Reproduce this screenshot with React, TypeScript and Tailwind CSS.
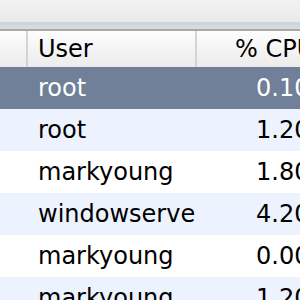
import React from "react";

const rows = [
  { user: "root", cpu: "0.10", sel: true },
  { user: "root", cpu: "1.20" },
  { user: "markyoung", cpu: "1.80" },
  { user: "windowserve", cpu: "4.20" },
  { user: "markyoung", cpu: "0.00" },
  { user: "markyoung", cpu: "1.20" },
];

export default function App() {
  return (
    <div
      className="w-[300px] h-[300px] overflow-hidden bg-white flex flex-col"
      style={{ fontFamily: '"DejaVu Sans", Verdana, sans-serif' }}
    >
      <div className="h-[22px] shrink-0 bg-gradient-to-b from-[#f2f2f2] to-[#e9e9e9]" />
      <div className="h-[3px] shrink-0 bg-[#c9d6e8]" />
      <div className="h-[4px] shrink-0 bg-[#dadada]" />
      <div className="h-[2px] shrink-0 bg-[#a9a9a9]" />
      <div className="h-[36px] shrink-0 flex bg-gradient-to-b from-[#fdfdfd] via-[#f4f4f4] to-[#ececec] text-[24px] leading-[36px] text-black">
        <div className="w-[28px] shrink-0 border-r-2 border-[#d4d4d4]" />
        <div className="w-[169px] shrink-0 pl-[10px] border-r-2 border-[#d4d4d4] whitespace-nowrap overflow-hidden">
          User
        </div>
        <div className="flex-1 pl-[38px] whitespace-nowrap">% CPU</div>
      </div>
      {rows.map((r, i) => (
        <div
          key={i}
          className={
            "h-[42px] shrink-0 flex text-[24px] leading-[42px] " +
            (r.sel
              ? "bg-[#6f8098] text-white"
              : i % 2 === 1
              ? "bg-[#edf3fe] text-black"
              : "bg-white text-black")
          }
        >
          <div className="w-[30px] shrink-0" />
          <div className="w-[168px] shrink-0 pl-[8px] whitespace-nowrap overflow-hidden">
            {r.user}
          </div>
          <div className="flex-1 pl-[58px] whitespace-nowrap">{r.cpu}</div>
        </div>
      ))}
    </div>
  );
}
